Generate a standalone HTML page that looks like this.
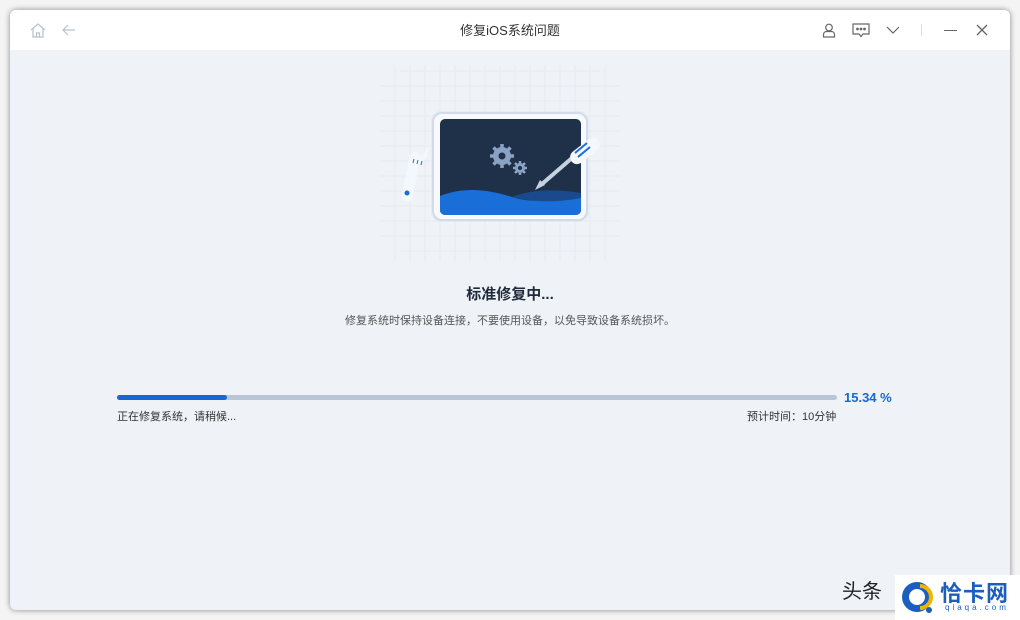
<!DOCTYPE html>
<html><head><meta charset="utf-8"><style>
*{margin:0;padding:0;box-sizing:border-box}
body{width:1020px;height:620px;background:#f4f4f4;font-family:"Liberation Sans","Noto Sans CJK SC",sans-serif;position:relative;overflow:hidden}
.win{position:absolute;left:10px;top:10px;width:1000px;height:600px;background:#eff3f8;border-radius:6px;box-shadow:0 0 6px rgba(0,0,0,.45);overflow:hidden}
.tb{height:40px;background:#fff;position:relative}
.title{position:absolute;left:0;right:0;top:10px;text-align:center;font-size:13px;color:#333}
.abs{position:absolute}
.bar{position:absolute;left:107px;top:385px;width:720px;height:5px;background:#b8c6d8;border-radius:3px}
.bar i{display:block;width:110px;height:5px;background:#1569d0;border-radius:3px}
</style></head><body>
<div class="win">
 <div class="tb">
  <svg class="abs" style="left:20px;top:13px" width="16" height="15" viewBox="0 0 16 15" fill="none" stroke="#b8c0cc" stroke-width="1.2"><path d="M1 7L8 1l7 6M3 5.5V14h10V5.5M6.5 14v-4h3v4"/></svg>
  <svg class="abs" style="left:52px;top:14px" width="14" height="12" viewBox="0 0 14 12" fill="none" stroke="#b8c0cc" stroke-width="1.2"><path d="M13 6H1M6 1L1 6l5 5"/></svg>
  <div class="title">修复iOS系统问题</div>
  <svg class="abs" style="left:812px;top:13px" width="14" height="15" viewBox="0 0 14 15" fill="none" stroke="#666" stroke-width="1.2"><circle cx="7" cy="4.5" r="3.3"/><path d="M1.5 14v-2.5a3 3 0 013-3h5a3 3 0 013 3V14z"/></svg>
  <svg class="abs" style="left:842px;top:13px" width="18" height="15" viewBox="0 0 18 15" fill="none" stroke="#666" stroke-width="1.2"><path d="M1 1h16v10H11l-2 2.5L7 11H1z"/><circle cx="5.5" cy="6" r=".8" fill="#666"/><circle cx="9" cy="6" r=".8" fill="#666"/><circle cx="12.5" cy="6" r=".8" fill="#666"/></svg>
  <svg class="abs" style="left:876px;top:16px" width="14" height="8" viewBox="0 0 14 8" fill="none" stroke="#666" stroke-width="1.2"><path d="M1 1l6 6 6-6"/></svg>
  <div class="abs" style="left:911px;top:14px;width:1px;height:12px;background:#ddd"></div>
  <div class="abs" style="left:934px;top:20px;width:13px;height:1.3px;background:#666"></div>
  <svg class="abs" style="left:966px;top:14px" width="12" height="12" viewBox="0 0 12 12" stroke="#666" stroke-width="1.3"><path d="M1 1l10 10M11 1L1 11"/></svg>
 </div>
 <svg class="abs" style="left:350px;top:36px" width="280" height="225" viewBox="-10 -10 280 225">
  <g stroke="#e6ebf2" stroke-width="1">
   <path d="M30 15H230M10 30H250M10 45H250M10 60H250M10 75H250M10 90H250M10 105H250M10 120H250M10 135H250M10 150H250M10 165H250M10 180H250M30 195H230"/>
   <path d="M25 10V205M40 10V205M55 10V205M70 10V205M85 10V205M100 10V205M115 10V205M130 10V205M145 10V205M160 10V205M175 10V205M190 10V205M205 10V205M220 10V205M235 10V205"/>
  </g>
  <rect x="61" y="55" width="158" height="111" rx="10" fill="#dfe6f2" opacity=".6"/>
  <rect x="63" y="57" width="154" height="107" rx="9" fill="#f7f9fd" stroke="#d3dbea" stroke-width="2"/>
  <rect x="70" y="63" width="141" height="96" rx="5" fill="#1f3049"/>
  <path d="M70 140c25-10 50-6 72 1s42 3 69-4v17a5 5 0 01-5 5H75a5 5 0 01-5-5z" fill="#1a6ed8"/>
  <path d="M142 141c20-8 45-8 69-4v5c-26 5-47 4-69-1z" fill="#1b4a8c"/>
  <g fill="#8aa3c4">
   <circle cx="132" cy="100" r="9"/>
   <g stroke="#8aa3c4" stroke-width="3.5"><path d="M132 88v24M120 100h24M123.5 91.5l17 17M140.5 91.5l-17 17"/></g>
   <circle cx="150" cy="112" r="5"/>
   <g stroke="#8aa3c4" stroke-width="2.5"><path d="M150 105v14M143 112h14M145 107l10 10M155 107l-10 10"/></g>
  </g>
  <circle cx="132" cy="100" r="3.5" fill="#1f3049"/><circle cx="150" cy="112" r="2" fill="#1f3049"/>
  <path d="M172 128l30-26" stroke="#c6d2e2" stroke-width="4"/>
  <path d="M165 134l5-10 5 5z" fill="#c6d2e2"/>
  <rect x="208" y="78" width="14" height="34" rx="7" transform="rotate(52 215 95)" fill="#f4f7fc"/>
  <path d="M205 97l12-10M208 101l12-10" stroke="#1a6ed8" stroke-width="2"/>
  <path d="M37 140l8-38" stroke="#f4f7fc" stroke-width="11" stroke-linecap="round"/>
  <path d="M37 95a9 9 0 0014 5c3-2 5-6 5-10a11 11 0 01-8 17l-8 -1z" fill="#f4f7fc"/>
  <path d="M44 103l-1 4M48 104l-1 4M52 105l-1 4" stroke="#1a6ed8" stroke-width="1"/>
  <circle cx="37" cy="137" r="2.5" fill="#1a6ed8"/>
 </svg>
 <div class="abs" style="left:0;right:0;top:273px;text-align:center;font-size:15px;font-weight:bold;color:#1f2a3a">标准修复中...</div>
 <div class="abs" style="left:0;right:0;top:302px;text-align:center;font-size:11px;color:#555">修复系统时保持设备连接，不要使用设备，以免导致设备系统损坏。</div>
 <div class="bar"><i></i></div>
 <div class="abs" style="left:834px;top:380px;font-size:13px;font-weight:bold;color:#1569d0">15.34 %</div>
 <div class="abs" style="left:107px;top:398px;font-size:11px;color:#333">正在修复系统，请稍候...</div>
 <div class="abs" style="left:737px;top:398px;font-size:11px;color:#333">预计时间：10分钟</div>
</div>
<div class="abs" style="left:842px;top:575px;font-size:20px;color:#222">头条</div>
<div class="abs" style="left:895px;top:575px;width:125px;height:45px;background:#fff"></div>
<svg class="abs" style="left:898px;top:578px" width="40" height="38" viewBox="0 0 40 38"><circle cx="19" cy="19" r="15" fill="#1a5fbf"/><circle cx="19" cy="19" r="8" fill="#fff"/><path d="M22 8a11 11 0 010 22" stroke="#f0b400" stroke-width="4" fill="none"/><circle cx="31" cy="32" r="3" fill="#1a5fbf"/></svg>
<div class="abs" style="left:940px;top:576px;font-size:22px;font-weight:bold;color:#1a5fbf;letter-spacing:1px">恰卡网</div>
<div class="abs" style="left:945px;top:603px;font-size:8px;color:#1a5fbf;letter-spacing:3px">qiaqa.com</div>
</body></html>
